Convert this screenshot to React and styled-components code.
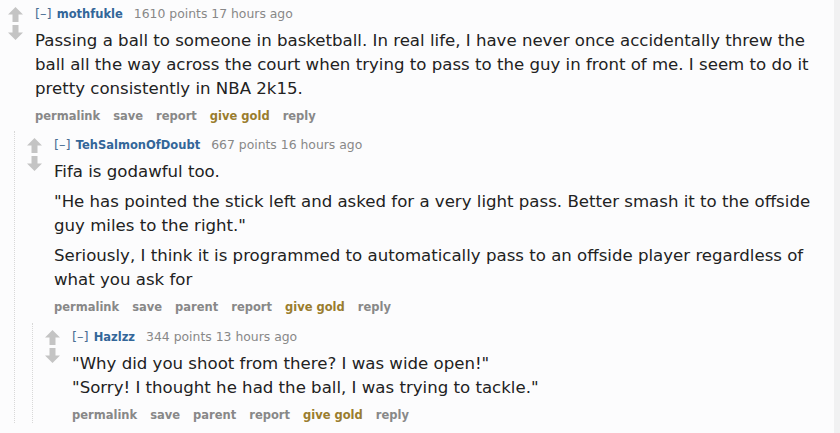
import styled, { createGlobalStyle } from "styled-components";

const GlobalStyle = createGlobalStyle`
  html, body {
    margin: 0;
    padding: 0;
    background: #fcfcfd;
  }
  body {
    font-family: "DejaVu Sans", Verdana, sans-serif;
  }
`;

const comments = {
  id: "c1",
  author: "mothfukle",
  points: 1610,
  age: "17 hours ago",
  body: [
    [
      "Passing a ball to someone in basketball. In real life, I have never once accidentally threw the ball all the way across the court when trying to pass to the guy in front of me. I seem to do it pretty consistently in NBA 2k15.",
    ],
  ],
  actions: ["permalink", "save", "report", "give gold", "reply"],
  children: [
    {
      id: "c2",
      author: "TehSalmonOfDoubt",
      points: 667,
      age: "16 hours ago",
      body: [
        ["Fifa is godawful too."],
        [
          '"He has pointed the stick left and asked for a very light pass. Better smash it to the offside guy miles to the right."',
        ],
        [
          "Seriously, I think it is programmed to automatically pass to an offside player regardless of what you ask for",
        ],
      ],
      actions: ["permalink", "save", "parent", "report", "give gold", "reply"],
      children: [
        {
          id: "c3",
          author: "Hazlzz",
          points: 344,
          age: "13 hours ago",
          body: [
            [
              '"Why did you shoot from there? I was wide open!"',
              '"Sorry! I thought he had the ball, I was trying to tackle."',
            ],
          ],
          actions: ["permalink", "save", "parent", "report", "give gold", "reply"],
          children: [],
        },
      ],
    },
  ],
};

const Page = styled.div`
  display: flex;
  width: 840px;
  min-height: 433px;
`;

const Main = styled.div`
  flex: 1;
  min-width: 0;
`;

const Strip = styled.div`
  width: 6px;
  background: #f1f1f2;
`;

const StyledComment = styled.div`
  display: flex;
  flex-direction: column;
`;

const Row = styled.div`
  display: flex;
  align-items: flex-start;
  padding-top: 5px;
`;

const Votes = styled.div`
  display: flex;
  flex-direction: column;
  gap: 3px;
  width: 15px;
  flex: none;
  margin-left: ${(props) => (props.$nested ? "12px" : "8px")};
  margin-right: 12px;
  padding-top: 2px;

  svg {
    display: block;
  }
`;

const Entry = styled.div`
  flex: 1;
  min-width: 0;
`;

const Tagline = styled.div`
  font-size: 12.4px;
  line-height: 18px;
  color: #888;
  white-space: nowrap;
`;

const Toggle = styled.span`
  color: #4a6e94;
  font-size: 13px;
  margin-right: 5px;
`;

const Author = styled.span`
  color: #369;
  font-weight: bold;
  font-size: 11.5px;
  margin-right: 11px;
`;

const Body = styled.div`
  margin-top: 6px;
  display: flex;
  flex-direction: column;
  gap: 6px;
  color: #222;
  font-size: 16.6px;
  line-height: 24px;
`;

const Para = styled.p`
  margin: 0;
`;

const Actions = styled.ul`
  display: flex;
  gap: 13px;
  margin: 7px 0 0;
  padding: 0;
  list-style: none;
  font-size: 11.5px;
  line-height: 16px;
  font-weight: bold;
`;

const Action = styled.li`
  color: ${(props) => (props.$gold ? "#9a7d2e" : "#888")};
`;

const Child = styled.div`
  margin-left: ${(props) => props.$indent}px;
  margin-top: ${(props) => props.$gap}px;
  border-left: 1px dotted #d8d8d8;
`;

const Arrow = ({ down }) => (
  <svg width="15" height="15" viewBox="0 0 15 15">
    <path
      d="M7.5 0 L15 7.5 L10.5 7.5 L10.5 15 L4.5 15 L4.5 7.5 L0 7.5 Z"
      fill="#c4c4c4"
      transform={down ? "rotate(180 7.5 7.5)" : undefined}
    />
  </svg>
);

const Comment = ({ data, depth }) => (
  <StyledComment>
    <Row>
      <Votes $nested={depth > 0}>
        <Arrow />
        <Arrow down />
      </Votes>
      <Entry>
        <Tagline>
          <Toggle>[–]</Toggle>
          <Author>{data.author}</Author>
          {data.points} points {data.age}
        </Tagline>
        <Body>
          {data.body.map((lines, i) => (
            <Para key={i}>
              {lines.map((line, j) => (
                <span key={j}>
                  {j > 0 && <br />}
                  {line}
                </span>
              ))}
            </Para>
          ))}
        </Body>
        <Actions>
          {data.actions.map((a) => (
            <Action key={a} $gold={a === "give gold"}>
              {a}
            </Action>
          ))}
        </Actions>
      </Entry>
    </Row>
    {data.children.map((child) => (
      <Child
        key={child.id}
        $indent={depth === 0 ? 14 : 17}
        $gap={depth === 0 ? 7 : 8}
      >
        <Comment data={child} depth={depth + 1} />
      </Child>
    ))}
  </StyledComment>
);

const App = () => (
  <>
    <GlobalStyle />
    <Page>
      <Main>
        <Comment data={comments} depth={0} />
      </Main>
      <Strip />
    </Page>
  </>
);

export default App;
